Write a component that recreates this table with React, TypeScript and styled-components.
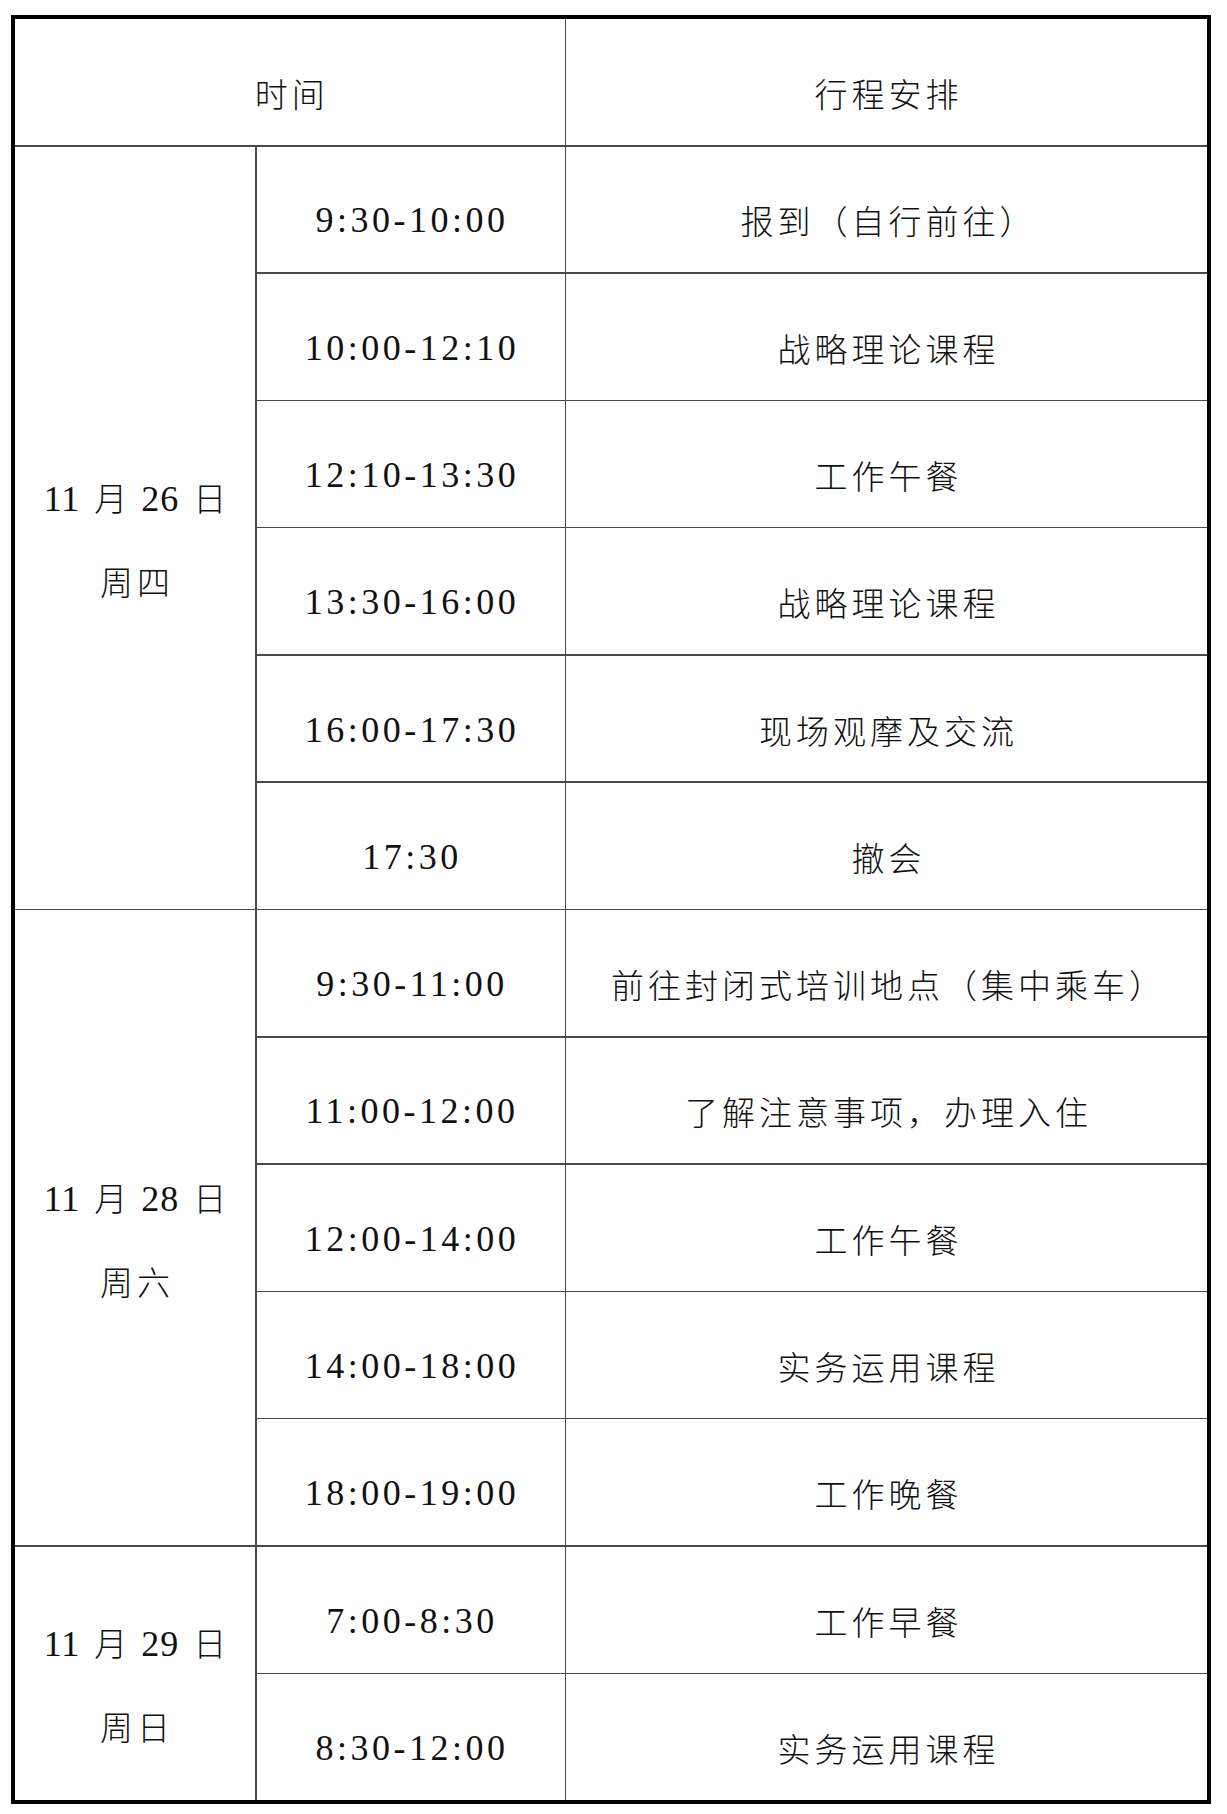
import React from 'react';
import styled, { createGlobalStyle } from 'styled-components';

const GlobalStyle = createGlobalStyle`
    html, body {
        margin: 0;
        padding: 0;
        background: #ffffff;
    }
    body {
        font-family: 'Liberation Serif', 'Noto Sans CJK SC', serif;
        color: #111111;
    }
`;

type Item = { time: string; task: string };
type Day = { month: string; day: string; week: string; items: Item[] };

const schedule: Day[] = [
    {
        month: '11',
        day: '26',
        week: '周四',
        items: [
            { time: '9:30-10:00', task: '报到（自行前往）' },
            { time: '10:00-12:10', task: '战略理论课程' },
            { time: '12:10-13:30', task: '工作午餐' },
            { time: '13:30-16:00', task: '战略理论课程' },
            { time: '16:00-17:30', task: '现场观摩及交流' },
            { time: '17:30', task: '撤会' },
        ],
    },
    {
        month: '11',
        day: '28',
        week: '周六',
        items: [
            { time: '9:30-11:00', task: '前往封闭式培训地点（集中乘车）' },
            { time: '11:00-12:00', task: '了解注意事项，办理入住' },
            { time: '12:00-14:00', task: '工作午餐' },
            { time: '14:00-18:00', task: '实务运用课程' },
            { time: '18:00-19:00', task: '工作晚餐' },
        ],
    },
    {
        month: '11',
        day: '29',
        week: '周日',
        items: [
            { time: '7:00-8:30', task: '工作早餐' },
            { time: '8:30-12:00', task: '实务运用课程' },
        ],
    },
];

const Page = styled.div`
    padding: 15px 0 0 11px;
`;

const Table = styled.div`
    width: 1200px;
    box-sizing: border-box;
    border: 4px solid #000000;
    display: grid;
    grid-template-columns: 240px 308px 1fr;
    grid-template-rows: 126px repeat(13, 125.8px);
    gap: 1.5px;
    background: #4a4a4a;
`;

const Cell = styled.div<{ $span?: number; $cols?: number }>`
    background: #ffffff;
    display: flex;
    align-items: center;
    justify-content: center;
    padding-top: 22px;
    box-sizing: border-box;
    ${(p) => (p.$span ? `grid-row: span ${p.$span};` : '')}
    ${(p) => (p.$cols ? `grid-column: span ${p.$cols};` : '')}
`;

const CnText = styled.span`
    font-family: 'Noto Sans CJK SC', sans-serif;
    font-weight: 300;
    font-size: 33px;
    letter-spacing: 4px;
    padding-left: 4px;
    white-space: nowrap;
`;

const TimeText = styled.span`
    font-family: 'Liberation Serif', serif;
    font-size: 36px;
    letter-spacing: 3.5px;
    padding-left: 3px;
    white-space: nowrap;
`;

const DateBlock = styled.div`
    display: flex;
    flex-direction: column;
    align-items: center;
    gap: 42px;
    font-family: 'Noto Sans CJK SC', sans-serif;
    font-weight: 300;
    font-size: 33px;
    line-height: 40px;
    white-space: nowrap;
`;

const DateLine = styled.div`
    display: flex;
    align-items: baseline;
    gap: 14px;
`;

const Num = styled.span`
    font-family: 'Liberation Serif', serif;
    font-size: 36px;
    letter-spacing: 1px;
`;

export default function App() {
    return (
        <Page>
            <GlobalStyle />
            <Table>
                <Cell $cols={2}>
                    <CnText>时间</CnText>
                </Cell>
                <Cell>
                    <CnText>行程安排</CnText>
                </Cell>
                {schedule.map((d) => (
                    <React.Fragment key={d.day}>
                        <Cell $span={d.items.length}>
                            <DateBlock>
                                <DateLine>
                                    <Num>{d.month}</Num>
                                    <span>月</span>
                                    <Num>{d.day}</Num>
                                    <span>日</span>
                                </DateLine>
                                <DateLine>
                                    <CnText>{d.week}</CnText>
                                </DateLine>
                            </DateBlock>
                        </Cell>
                        {d.items.map((it, i) => (
                            <React.Fragment key={i}>
                                <Cell>
                                    <TimeText>{it.time}</TimeText>
                                </Cell>
                                <Cell>
                                    <CnText>{it.task}</CnText>
                                </Cell>
                            </React.Fragment>
                        ))}
                    </React.Fragment>
                ))}
            </Table>
        </Page>
    );
}
